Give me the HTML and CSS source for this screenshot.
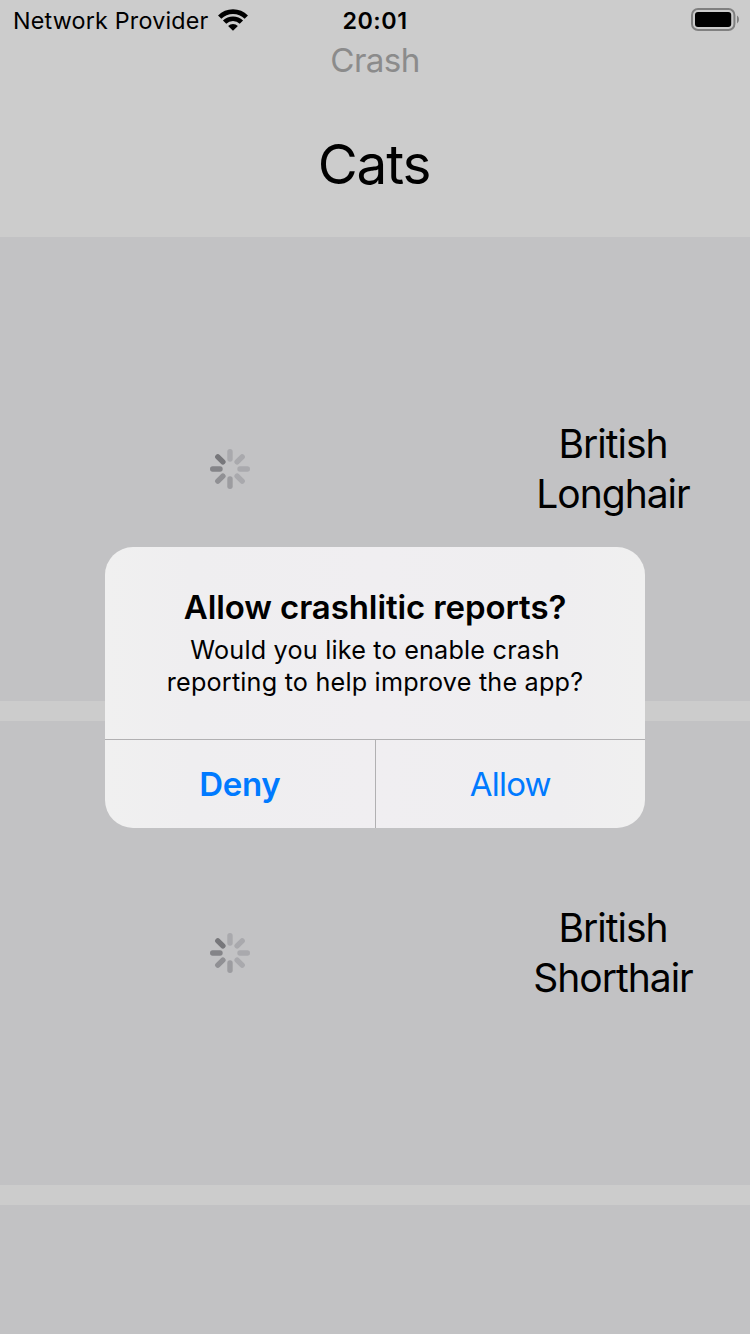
FILE: index.html
```html
<!DOCTYPE html>
<html lang="en">
<head>
<meta charset="utf-8">
<title>Cats</title>
<link rel="stylesheet" href="styles.css">
</head>
<body>
<svg class="defs" width="0" height="0">
  <symbol id="spinner" viewBox="-20 -20 40 40">
    <g stroke-width="5.4" stroke-linecap="round">
      <path stroke="#a9a9ad" d="M0-10V-17.3"/>
      <path stroke="#a9a9ad" d="M7.1-7.1L12.2-12.2"/>
      <path stroke="#a9a9ad" d="M10 0H17.3"/>
      <path stroke="#a9a9ad" d="M7.1 7.1L12.2 12.2"/>
      <path stroke="#9c9ca0" d="M0 10V17.3"/>
      <path stroke="#909094" d="M-7.1 7.1L-12.2 12.2"/>
      <path stroke="#848488" d="M-10 0H-17.3"/>
      <path stroke="#77777b" d="M-7.1-7.1L-12.2-12.2"/>
    </g>
  </symbol>
</svg>
<div class="screen">
  <header class="status">
    <div class="carrier"><span class="carrier-name">Network Provider</span>
      <svg class="wifi" width="30" height="22" viewBox="0 0 30 22">
        <g fill="none" stroke="#000" stroke-width="4.7">
          <path d="M1.7 8.1A18.8 18.8 0 0 1 28.3 8.1"/>
          <path d="M6.6 13.2A11.9 11.9 0 0 1 23.4 13.2"/>
        </g>
        <path d="M15 21.7L10.1 16.9A7 7 0 0 1 19.9 16.9Z"/>
      </svg>
    </div>
    <div class="time">20:01</div>
    <svg class="battery" width="49" height="24" viewBox="0 0 49 24">
      <rect x="1" y="1" width="42.4" height="21" rx="6" fill="none" stroke="#808080" stroke-width="2"/>
      <rect x="4" y="4" width="36.2" height="15" rx="3"/>
      <path fill="#808080" d="M46 7.6C48.6 9 48.6 14 46 15.4Z"/>
    </svg>
  </header>
  <div class="crash">Crash</div>
  <h1 class="title">Cats</h1>
  <main class="list">
    <article class="row">
      <div class="thumb"><svg class="spinner"><use href="#spinner"/></svg></div>
      <div class="breed">British<br>Longhair</div>
    </article>
    <article class="row">
      <div class="thumb"><svg class="spinner"><use href="#spinner"/></svg></div>
      <div class="breed">British<br>Shorthair</div>
    </article>
    <article class="row"></article>
  </main>
  <section class="dialog" role="dialog">
    <div class="message">
      <h2 class="question">Allow crashlitic reports?</h2>
      <p class="detail">Would you like to enable crash<br>reporting to help improve the app?</p>
    </div>
    <div class="actions">
      <div class="action deny">Deny</div>
      <div class="action allow">Allow</div>
    </div>
  </section>
</div>
</body>
</html>
```
FILE: styles.css
```css
* { box-sizing: border-box; }
body { margin: 0; font-family: Inter, "Liberation Sans", sans-serif; color: #000; }
.defs { display: block; position: absolute; }
.screen {
  position: relative;
  display: flex;
  flex-direction: column;
  width: 750px;
  height: 1334px;
  overflow: hidden;
  background: #ccc;
}
.status {
  flex: none;
  display: grid;
  grid-template-columns: 1fr 70px 1fr;
  align-items: center;
  height: 40px;
  padding: 0 10px 0 13px;
}
.carrier { display: flex; align-items: center; gap: 9px; }
.carrier-name { font-size: 23.3px; line-height: 30px; padding-top: 1px; letter-spacing: 0.2px; white-space: nowrap; }
.time { padding: 1px 3px 0 0; font-size: 23.3px; line-height: 30px; font-weight: 600; text-align: center; letter-spacing: 0.5px; }
.battery { justify-self: end; }
.crash {
  flex: none;
  height: 42px;
  line-height: 40px;
  text-align: center;
  font-size: 33.2px;
  letter-spacing: -0.6px;
  color: #8b8b8b;
}
.title {
  flex: none;
  margin: 0;
  height: 155px;
  padding: 47px 2px 0 0;
  line-height: 70px;
  text-align: center;
  font-size: 54.8px;
  font-weight: 400;
  letter-spacing: -1.1px;
}
.list { flex: none; display: flex; flex-direction: column; gap: 20px; }
.row { display: flex; height: 464px; background: #c2c2c4; }
.thumb { display: flex; flex: none; width: 460px; align-items: center; justify-content: center; }
.spinner { width: 40px; height: 40px; }
.breed {
  flex: none;
  width: 306px;
  align-self: center;
  text-align: center;
  font-size: 39px;
  line-height: 50px;
  letter-spacing: -1px;
}
.dialog {
  position: absolute;
  left: 105px;
  top: 547px;
  display: flex;
  flex-direction: column;
  width: 540px;
  height: 281px;
  overflow: hidden;
  border-radius: 28px;
  background: linear-gradient(90deg, #f0f0f0, #efeef0 16%, #f0eef1 50%, #efeef0 84%, #f0f0f0);
}
.message { flex: none; height: 192px; padding-top: 39px; text-align: center; }
.question { margin: 0; font-size: 33px; line-height: 42px; font-weight: 600; letter-spacing: -0.1px; }
.detail { margin: 6px 0 0; font-size: 25.2px; line-height: 32px; letter-spacing: 0.2px; }
.actions { display: flex; flex: none; height: 89px; border-top: 1px solid #b1b0b2; }
.action { flex: 1; text-align: center; line-height: 89px; font-size: 33px; color: #007aff; }
.deny { font-weight: 600; letter-spacing: -0.3px; }
.allow { border-left: 1px solid #b1b0b2; letter-spacing: -0.75px; }
```
